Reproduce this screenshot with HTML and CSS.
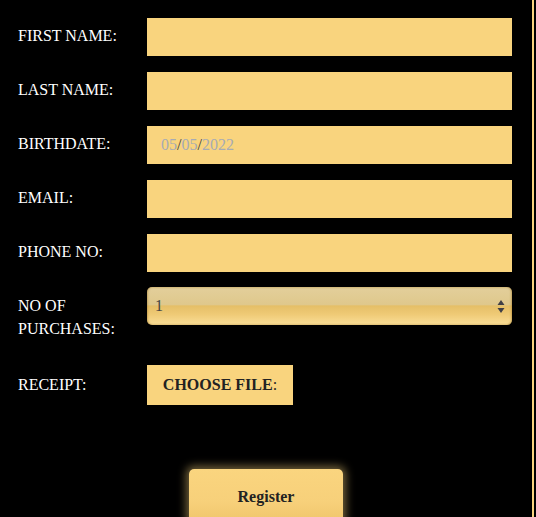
FILE: index.html
```html
<!DOCTYPE html>
<html>
<head>
<meta charset="utf-8">
<link rel="stylesheet" href="styles.css">
</head>
<body>
<div class="page">
  <form class="form">
    <div class="row">
      <label class="label">FIRST NAME:</label>
      <input class="field" type="text">
    </div>
    <div class="row">
      <label class="label">LAST NAME:</label>
      <input class="field" type="text">
    </div>
    <div class="row">
      <label class="label">BIRTHDATE:</label>
      <div class="field date"><span class="dim">05</span>/<span class="dim">05</span>/<span class="dim">2022</span></div>
    </div>
    <div class="row">
      <label class="label">EMAIL:</label>
      <input class="field" type="text">
    </div>
    <div class="row">
      <label class="label">PHONE NO:</label>
      <input class="field" type="text">
    </div>
    <div class="row row-tall">
      <label class="label">NO OF PURCHASES:</label>
      <div class="select">
        <span class="select-value">1</span>
        <svg class="arrows" width="8" height="13" viewBox="0 0 8 13"><path d="M4 0 L7.5 5 L0.5 5 Z M0.5 8 L7.5 8 L4 13 Z" fill="#3f3f46"/></svg>
      </div>
    </div>
    <div class="row row-file">
      <label class="label label-file">RECEIPT:</label>
      <button class="file-btn" type="button"><b>CHOOSE FILE</b>:</button>
    </div>
    <div class="actions">
      <button class="register" type="button">Register</button>
    </div>
  </form>
</div>
</body>
</html>
```

FILE: styles.css
```css
html, body {
  margin: 0;
  padding: 0;
  background: #000;
}
body {
  font-family: "Liberation Serif", "Times New Roman", serif;
  font-size: 16px;
  overflow: hidden;
}
.page {
  width: 534px;
  height: 517px;
  box-sizing: border-box;
  border-right: 2px solid #f9d47e;
}
.form {
  padding: 18px 0 0 18px;
}
.row {
  display: flex;
  align-items: flex-start;
  margin-bottom: 16px;
}
.row-tall {
  margin-bottom: 25px;
}
.label {
  width: 129px;
  flex: none;
  box-sizing: border-box;
  padding-top: 6px;
  padding-right: 8px;
  color: #fff;
  line-height: 23px;
  text-transform: uppercase;
}
.label-file {
  padding-top: 8px;
}
.field {
  width: 365px;
  height: 38px;
  box-sizing: border-box;
  border: none;
  outline: none;
  margin: 0;
  padding: 0 14px;
  background: #f9d47e;
  font-family: inherit;
  font-size: 16px;
  color: #333;
}
.date {
  display: flex;
  align-items: center;
  color: #3a3a3a;
}
.dim {
  color: #a6abb5;
}
.select {
  width: 365px;
  height: 38px;
  box-sizing: border-box;
  border-radius: 5px;
  margin-top: -1px;
  padding: 0 7px 0 8px;
  display: flex;
  align-items: center;
  justify-content: space-between;
  background: linear-gradient(to bottom, #e3cf9b 0%, #dfc88c 46%, #e5bf67 50%, #efca76 72%, #fadf99 100%);
  box-shadow: inset 1px 0 2px rgba(160, 120, 40, 0.45), inset -1px 0 2px rgba(160, 120, 40, 0.45);
  color: #444;
}
.select-value {
  font-size: 16px;
}
.arrows {
  display: block;
}
.file-btn {
  width: 146px;
  height: 40px;
  border: none;
  margin: 0;
  padding: 0;
  background: #f9d47e;
  font-family: inherit;
  font-size: 16px;
  color: #222;
  text-align: center;
  font-weight: normal;
}
.file-btn b {
  font-weight: bold;
}
.actions {
  display: flex;
  justify-content: center;
  width: 496px;
  padding-top: 48px;
}
.register {
  width: 154px;
  height: 55px;
  border: none;
  border-radius: 5px;
  background: linear-gradient(to bottom, #fad57f 0%, #f7d07a 60%, #efc56a 100%);
  box-shadow: 0 0 9px 3px rgba(249, 212, 126, 0.45);
  font-family: inherit;
  font-size: 16px;
  font-weight: bold;
  color: #222;
}
```
